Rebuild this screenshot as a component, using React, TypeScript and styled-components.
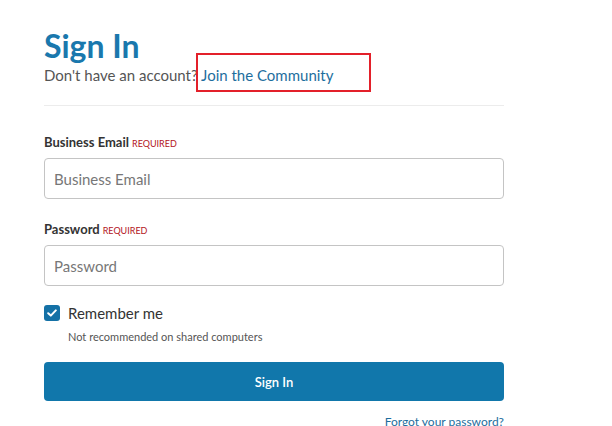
import React from 'react';
import styled, { createGlobalStyle } from 'styled-components';

const GlobalStyle = createGlobalStyle`
  html, body {
    margin: 0;
    padding: 0;
    background: #fff;
    font-family: Lato, "Open Sans", sans-serif;
    color: #333;
  }
`;

const Page = styled.div`
  position: relative;
  width: 612px;
  height: 426px;
  overflow: hidden;
  padding: 27px 0 0 44px;
  box-sizing: border-box;
`;

const Form = styled.form`
  width: 460px;
  display: flex;
  flex-direction: column;
`;

const Title = styled.h1`
  margin: 0;
  font-size: 32px;
  line-height: 38px;
  font-weight: 700;
  color: #1a78ad;
`;

const Subtitle = styled.p`
  margin: 0;
  font-size: 15px;
  line-height: 20px;
  color: #555;
`;

const Link = styled.a<{ $size?: number }>`
  color: #1d6e9e;
  text-decoration: none;
  font-size: ${p => p.$size ?? 15}px;
`;

const Divider = styled.hr`
  margin: 20px 0 0;
  border: 0;
  border-top: 1px solid #ececec;
`;

const Field = styled.div<{ $top: number }>`
  display: flex;
  flex-direction: column;
  gap: 6px;
  margin-top: ${p => p.$top}px;
`;

const Label = styled.label`
  font-size: 13px;
  line-height: 16px;
  font-weight: 700;
  color: #333;
`;

const Required = styled.span`
  margin-left: 3px;
  font-size: 9px;
  font-weight: 400;
  color: #b3141c;
  text-transform: uppercase;
`;

const Input = styled.input`
  box-sizing: border-box;
  width: 100%;
  height: 41px;
  padding: 0 9px;
  border: 1px solid #c4c4c4;
  border-radius: 4px;
  font-family: inherit;
  font-size: 15px;
  color: #333;
  outline: none;
  &::placeholder {
    color: #777;
  }
`;

const CheckRow = styled.div`
  display: flex;
  align-items: center;
  gap: 8px;
  margin-top: 18px;
`;

const Box = styled.span`
  width: 16px;
  height: 16px;
  border-radius: 3px;
  background: #1471a6;
  display: flex;
  align-items: center;
  justify-content: center;
`;

const CheckText = styled.span`
  font-size: 15px;
  line-height: 18px;
  color: #333;
`;

const Hint = styled.div`
  margin: 8px 0 0 24px;
  font-size: 11px;
  line-height: 14px;
  color: #555;
`;

const Button = styled.button`
  margin-top: 18px;
  height: 39px;
  border: 0;
  border-radius: 4px;
  background: #1177ab;
  color: #fff;
  font-family: inherit;
  font-size: 13px;
  font-weight: 600;
`;

const Footer = styled.div`
  display: flex;
  justify-content: flex-end;
  margin-top: 13px;
  line-height: 16px;
`;

const Highlight = styled.div`
  position: absolute;
  left: 196px;
  top: 53px;
  width: 175px;
  height: 39px;
  box-sizing: border-box;
  border: 2px solid #e3202a;
  pointer-events: none;
`;

export default function App() {
  return (
    <Page>
      <GlobalStyle />
      <Form onSubmit={e => e.preventDefault()}>
        <Title>Sign In</Title>
        <Subtitle>
          Don't have an account? <Link href="#">Join the Community</Link>
        </Subtitle>
        <Divider />
        <Field $top={28}>
          <Label>
            Business Email<Required>Required</Required>
          </Label>
          <Input placeholder="Business Email" />
        </Field>
        <Field $top={22}>
          <Label>
            Password<Required>Required</Required>
          </Label>
          <Input type="password" placeholder="Password" />
        </Field>
        <CheckRow>
          <Box>
            <svg width="10" height="8" viewBox="0 0 10 8">
              <path d="M1.2 4.2 L3.8 6.6 L8.8 1.4" fill="none" stroke="#fff" strokeWidth="2" strokeLinecap="round" strokeLinejoin="round" />
            </svg>
          </Box>
          <CheckText>Remember me</CheckText>
        </CheckRow>
        <Hint>Not recommended on shared computers</Hint>
        <Button type="submit">Sign In</Button>
        <Footer>
          <Link href="#" $size={12}>Forgot your password?</Link>
        </Footer>
      </Form>
      <Highlight />
    </Page>
  );
}
